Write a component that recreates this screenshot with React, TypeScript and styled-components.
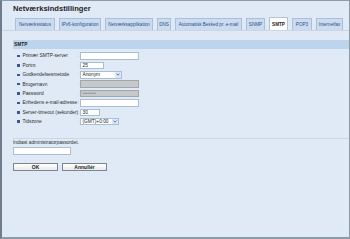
import React from "react";
import styled, { createGlobalStyle } from "styled-components";

const Global = createGlobalStyle`
  html, body { margin: 0; padding: 0; background: #dfeaf6; }
  body { font-family: "Liberation Sans", Arial, sans-serif; }
`;

const Page = styled.div`
  box-sizing: border-box;
  width: 350px;
  height: 239px;
  background: #dfeaf6;
  border: 1px solid #8d9aa8;
  border-left: 2px solid #6f7c8a;
  border-bottom: 2px solid #8d9aa8;
  color: #222;
  font-size: 4.8px;
  overflow: hidden;
`;

const Title = styled.h1`
  margin: 0;
  padding: 3px 0 0 11px;
  font-size: 7.6px;
  line-height: 9px;
  font-weight: bold;
  color: #1e1e1e;
`;

const TabRow = styled.div`
  display: flex;
  align-items: flex-end;
  gap: 4px;
  height: 13px;
  margin-top: 4px;
  padding-left: 13px;
  border-bottom: 1px solid #c9d6e4;
`;

const Tab = styled.div<{ $active?: boolean; $w: number }>`
  box-sizing: border-box;
  flex: none;
  width: ${(p) => p.$w}px;
  height: ${(p) => (p.$active ? 13 : 12)}px;
  display: flex;
  align-items: center;
  justify-content: center;
  background: ${(p) => (p.$active ? "#ffffff" : "#cbdcf0")};
  border: 1px solid ${(p) => (p.$active ? "#b4c4d6" : "#a9bfdb")};
  border-bottom: none;
  color: ${(p) => (p.$active ? "#222" : "#2f4f86")};
  font-size: 4.6px;
  font-weight: ${(p) => (p.$active ? "bold" : "normal")};
  white-space: nowrap;
`;

const Section = styled.div`
  margin: 9px 0 0 11px;
`;

const SectionHead = styled.div`
  height: 9px;
  line-height: 9px;
  padding-left: 1px;
  background: #bcd5ec;
  font-weight: bold;
  color: #1e1e1e;
`;

const Rows = styled.div`
  margin-top: 2.3px;
  display: flex;
  flex-direction: column;
`;

const Row = styled.div`
  height: 9.4px;
  display: flex;
  align-items: center;
  padding-left: 4px;
`;

const Bullet = styled.span`
  width: 2.5px;
  height: 2.5px;
  background: #3a5898;
  margin-right: 3px;
  flex: none;
`;

const Label = styled.span`
  flex: none;
  width: 57.5px;
  display: flex;
  justify-content: space-between;
  padding-right: 1px;
  box-sizing: border-box;
  color: #2a2a2a;
  white-space: nowrap;
`;

const Colon = styled.span`
  color: #8a96a4;
`;

const Field = styled.div<{ $w: number; $disabled?: boolean }>`
  box-sizing: border-box;
  width: ${(p) => p.$w}px;
  height: 7.5px;
  border: 1px solid ${(p) => (p.$disabled ? "#9fa6ad" : "#a9bdd3")};
  background: ${(p) => (p.$disabled ? "#c6c8ca" : "#ffffff")};
  color: ${(p) => (p.$disabled ? "#8c9094" : "#222")};
  line-height: 5.5px;
  padding-left: 1.5px;
  font-size: 4.8px;
  overflow: hidden;
  white-space: nowrap;
`;

const Select = styled.div<{ $w: number }>`
  box-sizing: border-box;
  width: ${(p) => p.$w}px;
  height: 7.5px;
  border: 1px solid #a9bdd3;
  background: #ffffff;
  display: flex;
  align-items: stretch;
`;

const SelectText = styled.span`
  flex: 1;
  line-height: 5.5px;
  padding-left: 1.5px;
  white-space: nowrap;
`;

const Arrow = styled.span`
  width: 6px;
  background: #dde7f4;
  display: flex;
  align-items: center;
  justify-content: center;
`;

const Divider = styled.div`
  margin-top: 11.5px;
  height: 1px;
  background: #cad8e6;
`;

const AdminLabel = styled.div`
  margin-top: 1.5px;
  line-height: 6px;
  color: #2a2a2a;
`;

const AdminInput = styled(Field)`
  margin-top: 1px;
`;

const Buttons = styled.div`
  display: flex;
  gap: 4px;
  margin-top: 8px;
`;

const Button = styled.button`
  box-sizing: border-box;
  width: 45px;
  height: 8px;
  padding: 0;
  border: 1px solid #7f858c;
  background: linear-gradient(#ffffff, #e9ebee);
  font-family: "Liberation Sans", Arial, sans-serif;
  font-size: 5px;
  font-weight: bold;
  line-height: 6px;
  color: #1e1e1e;
`;

const Chevron = () => (
  <svg width="4" height="3" viewBox="0 0 4 3">
    <path d="M0.5 0.6 L2 2.2 L3.5 0.6" fill="none" stroke="#3d63b0" strokeWidth="0.9" />
  </svg>
);

const tabs: { label: string; w: number }[] = [
  { label: "Netværksstatus", w: 40 },
  { label: "IPv6-konfiguration", w: 42 },
  { label: "Netværksapplikation", w: 48 },
  { label: "DNS", w: 14 },
  { label: "Automatisk Besked pr. e-mail", w: 67 },
  { label: "SNMP", w: 19 },
  { label: "SMTP", w: 19 },
  { label: "POP3", w: 20 },
  { label: "Internetfax", w: 27 },
];

type RowDef = {
  label: string;
  kind: "text" | "select" | "disabled";
  w: number;
  value?: string;
};

const rows: RowDef[] = [
  { label: "Primær SMTP-server", kind: "text", w: 59 },
  { label: "Portnr.", kind: "text", w: 24, value: "25" },
  { label: "Godkendelsesmetode", kind: "select", w: 42, value: "Anonym" },
  { label: "Brugernavn", kind: "disabled", w: 59 },
  { label: "Password", kind: "disabled", w: 59, value: "••••••••" },
  { label: "Enhedens e-mail-adresse", kind: "text", w: 59 },
  { label: "Server-timeout (sekunder)", kind: "text", w: 20, value: "30" },
  { label: "Tidszone", kind: "select", w: 39, value: "(GMT)+0:00" },
];

export default function App() {
  return (
    <>
      <Global />
      <Page>
        <Title>Netværksindstillinger</Title>
        <TabRow>
          {tabs.map((t) => (
            <Tab key={t.label} $w={t.w} $active={t.label === "SMTP"}>
              {t.label}
            </Tab>
          ))}
        </TabRow>
        <Section>
          <SectionHead>SMTP</SectionHead>
          <Rows>
            {rows.map((r) => (
              <Row key={r.label}>
                <Bullet />
                <Label>
                  <span>{r.label}</span>
                  <Colon>:</Colon>
                </Label>
                {r.kind === "select" ? (
                  <Select $w={r.w}>
                    <SelectText>{r.value}</SelectText>
                    <Arrow>
                      <Chevron />
                    </Arrow>
                  </Select>
                ) : (
                  <Field $w={r.w} $disabled={r.kind === "disabled"}>
                    {r.value}
                  </Field>
                )}
              </Row>
            ))}
          </Rows>
          <Divider />
          <AdminLabel>Indtast administratorpassordet.</AdminLabel>
          <AdminInput $w={58} />
          <Buttons>
            <Button>OK</Button>
            <Button>Annullér</Button>
          </Buttons>
        </Section>
      </Page>
    </>
  );
}
